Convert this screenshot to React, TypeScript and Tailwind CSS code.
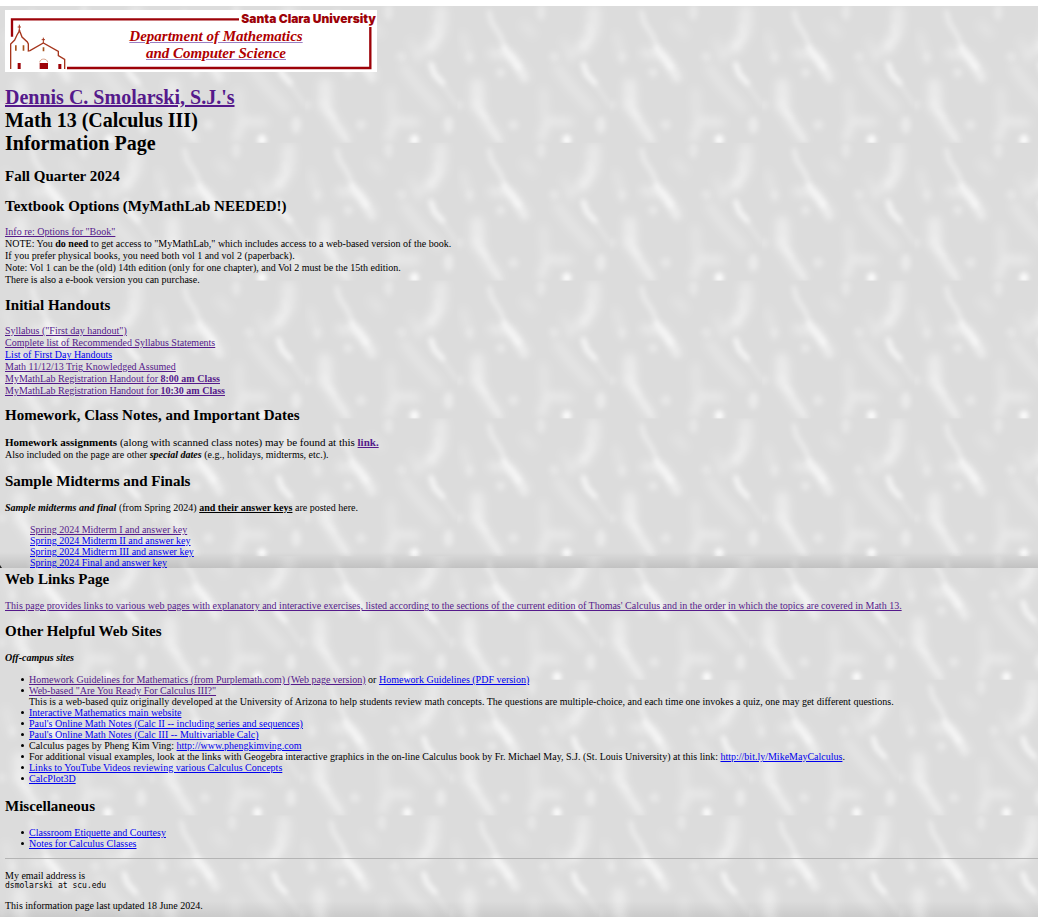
import type { ReactNode } from "react";

const visited = "text-[#551a8b] underline";
const fresh = "text-[#0000ee] underline";
const heading = "text-[15px] leading-[17px] font-bold";
const bullets =
  "pl-6 [&>li]:relative [&>li]:before:absolute [&>li]:before:top-1 [&>li]:before:-left-2 [&>li]:before:size-[3px] [&>li]:before:rounded-full [&>li]:before:bg-black";

function A({ seen = false, children }: { seen?: boolean; children: ReactNode }) {
  return (
    <a href="#" className={seen ? visited : fresh}>
      {children}
    </a>
  );
}

/* Repeating marble texture, drawn on a 456 x 414 tile. */
function Marble({ id, width, height, top }: { id: string; width: number; height: number; top: number }) {
  return (
    <svg className="absolute inset-0 -z-10 h-full w-full" aria-hidden="true">
      <defs>
        <filter id={`${id}-soft`} x="-60%" y="-60%" width="220%" height="220%">
          <feGaussianBlur stdDeviation="8" />
        </filter>
        <filter id={`${id}-haze`} x="-60%" y="-60%" width="220%" height="220%">
          <feGaussianBlur stdDeviation="13" />
        </filter>
        <pattern id={id} y={top} width={width} height={height} patternUnits="userSpaceOnUse" viewBox="0 0 456 414" preserveAspectRatio="none">
          <rect width="456" height="414" fill="#dcdcdc" />
          <g fill="none" stroke="#fff" strokeLinecap="round" strokeLinejoin="round" filter={`url(#${id}-haze)`}>
            <path d="M60 240L62 270L60 300" strokeWidth="40" opacity=".42" />
            <path d="M62 300L82 345L122 400" strokeWidth="28" opacity=".36" />
            <path d="M408 20L405 80L378 125" strokeWidth="40" opacity=".36" />
            <path d="M378 125L340 150" strokeWidth="30" opacity=".2" />
            <path d="M105 145L160 150L205 215" strokeWidth="26" opacity=".4" />
            <path d="M300 190L340 245L400 310" strokeWidth="26" opacity=".26" />
            <path d="M252 400L268 348L335 352" strokeWidth="22" opacity=".42" />
            <path d="M18 90L38 165" strokeWidth="18" opacity=".26" />
            <path d="M258 260L262 330" strokeWidth="22" opacity=".26" />
            <path d="M200 60L225 85" strokeWidth="26" opacity=".2" />
            <path d="M320 110L340 160" strokeWidth="24" opacity=".18" />
          </g>
          <g fill="none" stroke="#fff" strokeLinecap="round" strokeLinejoin="round" filter={`url(#${id}-soft)`}>
            <path d="M96 22L103 52L128 90L142 125" strokeWidth="15" opacity=".42" />
            <path d="M142 132L165 160L182 185" strokeWidth="22" opacity=".56" />
            <path d="M182 185L200 222" strokeWidth="20" opacity=".28" />
            <path d="M378 178L388 208L412 234" strokeWidth="16" opacity=".74" />
            <path d="M415 240L456 300" strokeWidth="10" opacity=".26" />
            <path d="M72 322L86 338" strokeWidth="18" opacity=".36" />
            <path d="M90 350L130 412" strokeWidth="12" opacity=".3" />
            <path d="M395 65L402 95L380 122" strokeWidth="18" opacity=".15" />
            <circle cx="130" cy="203" r="14" fill="#fff" stroke="none" opacity=".34" />
            <circle cx="290" cy="155" r="15" fill="#fff" stroke="none" opacity=".28" />
            <circle cx="168" cy="360" r="15" fill="#fff" stroke="none" opacity=".32" />
            <circle cx="6" cy="300" r="14" fill="#fff" stroke="none" opacity=".24" />
            <ellipse cx="430" cy="360" rx="15" ry="26" fill="#fff" stroke="none" opacity=".4" />
            <ellipse cx="328" cy="406" rx="13" ry="16" fill="#fff" stroke="none" opacity=".95" />
            <ellipse cx="38" cy="157" rx="9" ry="17" fill="#fff" stroke="none" opacity=".3" />
            <ellipse cx="251" cy="22" rx="13" ry="24" fill="#fff" stroke="none" opacity=".3" />
          </g>
        </pattern>
      </defs>
      <rect width="100%" height="100%" fill={`url(#${id})`} />
    </svg>
  );
}

function Banner() {
  return (
    <a href="#" className="relative flex h-[62px] w-[372px] flex-col bg-white text-[#b00000]">
      <svg className="absolute inset-0 h-full w-full" viewBox="15 15 1116 186" aria-hidden="true">
        <path d="M36 95V43H717M1111 66V189H201" fill="none" stroke="#9d0208" strokeWidth="7" />
        <g fill="none" stroke="#a5351c" strokeWidth="4">
          <path d="M32 192V117L44 105L51 90L57 80L58 74L60 80L66 96L82 111L85 117V138L90 137L130 114L175 139V152L194 163V192" />
          <path d="M58 59V76M53 66H63M130 98V114M125 104H135" strokeWidth="3" />
          <path d="M119 172C120 159 142 159 143 172" stroke="#d9a48c" strokeWidth="3" />
        </g>
        <path d="M45 121h5v16h-5zM68 121h5v16h-5zM128 127h5v12h-5z" fill="#a5541c" />
        <path d="M53 174h9v18h-9zM119 174h25v18h-25zM175 177h9v15h-9z" fill="#9d0208" />
      </svg>
      <span className="self-end pr-px font-['Inter',sans-serif] text-[12px] leading-[18px] font-black text-[#9d0208]">
        Santa Clara University
      </span>
      <span className="pl-[50px] text-center text-[15px] leading-[17px] font-bold italic underline decoration-[#9a7fc4]">
        Department of Mathematics
        <br />
        and Computer Science
      </span>
    </a>
  );
}

export default function App() {
  return (
    <main className="border-t-6 border-white bg-[#dcdcdc] font-['Liberation_Serif',serif] text-[10px] leading-[12px] text-black">
      <div className="relative isolate pt-1 pl-[5px]">
        <Marble id="marble-a" width={152.4} height={137.8} top={-1} />
        <div className="absolute inset-x-0 bottom-0 -z-10 h-4 bg-linear-to-b from-transparent to-black/12" />
        <svg className="absolute bottom-0 left-0 h-[3px] w-[2px]" viewBox="0 0 2 3" aria-hidden="true">
          <path d="M0 0L2 3H0Z" fill="#222" />
        </svg>

        <Banner />
        <h1 className="mt-[14px] text-[20px] leading-[23px] font-bold">
          <A seen>Dennis C. Smolarski, S.J.'s</A>
          <br />
          Math 13 (Calculus III)
          <br />
          Information Page
        </h1>
        <h2 className={`mt-[13px] ${heading}`}>Fall Quarter 2024</h2>

        <h2 className={`mt-[13px] ${heading}`}>Textbook Options (MyMathLab NEEDED!)</h2>
        <p className="mt-[11px]">
          <A seen>Info re: Options for "Book"</A>
          <br />
          NOTE: You <b>do need</b> to get access to "MyMathLab," which includes access to a web-based version of the book.
          <br />
          If you prefer physical books, you need both vol 1 and vol 2 (paperback).
          <br />
          Note: Vol 1 can be the (old) 14th edition (only for one chapter), and Vol 2 must be the 15th edition.
          <br />
          There is also a e-book version you can purchase.
        </p>

        <h2 className={`mt-[11px] ${heading}`}>Initial Handouts</h2>
        <p className="mt-[11px]">
          <A seen>Syllabus ("First day handout")</A>
          <br />
          <A seen>Complete list of Recommended Syllabus Statements</A>
          <br />
          <A>List of First Day Handouts</A>
          <br />
          <A seen>Math 11/12/13 Trig Knowledged Assumed</A>
          <br />
          <A seen>
            MyMathLab Registration Handout for <b>8:00 am Class</b>
          </A>
          <br />
          <A seen>
            MyMathLab Registration Handout for <b>10:30 am Class</b>
          </A>
        </p>

        <h2 className={`mt-[10px] ${heading}`}>Homework, Class Notes, and Important Dates</h2>
        <p className="mt-[12px]">
          <span className="text-[11px]">
            <b>Homework assignments</b> (along with scanned class notes) may be found at this{" "}
            <b>
              <A seen>link.</A>
            </b>
          </span>
          <br />
          Also included on the page are other <b className="italic">special dates</b> (e.g., holidays, midterms, etc.).
        </p>

        <h2 className={`mt-[12px] ${heading}`}>Sample Midterms and Finals</h2>
        <p className="mt-[12px]">
          <b className="italic">Sample midterms and final</b> (from Spring 2024) <b className="underline">and their answer keys</b> are
          posted here.
        </p>
        <ul className="mt-[10px] pl-[25px] leading-[11px]">
          <li>
            <A seen>Spring 2024 Midterm I and answer key</A>
          </li>
          <li>
            <A>Spring 2024 Midterm II and answer key</A>
          </li>
          <li>
            <A>Spring 2024 Midterm III and answer key</A>
          </li>
          <li>
            <A>Spring 2024 Final and answer key</A>
          </li>
        </ul>
      </div>

      <div className="relative isolate pt-[3px] pb-[6px] pl-[5px] leading-[11px]">
        <Marble id="marble-b" width={149.8} height={135.7} top={-24} />
        <div className="absolute inset-x-0 bottom-0 -z-10 h-4 bg-linear-to-b from-transparent to-black/8" />

        <h2 className={heading}>Web Links Page</h2>
        <p className="mt-[12px]">
          <A seen>
            This page provides links to various web pages with explanatory and interactive exercises, listed according to the sections of
            the current edition of Thomas' Calculus and in the order in which the topics are covered in Math 13.
          </A>
        </p>

        <h2 className={`mt-[12px] ${heading}`}>Other Helpful Web Sites</h2>
        <h3 className="mt-[12px] font-bold italic">Off-campus sites</h3>
        <ul className={`mt-[11px] ${bullets}`}>
          <li>
            <A seen>Homework Guidelines for Mathematics (from Purplemath.com) (Web page version)</A> or{" "}
            <A>Homework Guidelines (PDF version)</A>
          </li>
          <li>
            <A seen>Web-based "Are You Ready For Calculus III?"</A>
            <br />
            This is a web-based quiz originally developed at the University of Arizona to help students review math concepts. The
            questions are multiple-choice, and each time one invokes a quiz, one may get different questions.
          </li>
          <li>
            <A>Interactive Mathematics main website</A>
          </li>
          <li>
            <A>Paul's Online Math Notes (Calc II -- including series and sequences)</A>
          </li>
          <li>
            <A>Paul's Online Math Notes (Calc III -- Multivariable Calc)</A>
          </li>
          <li>
            Calculus pages by Pheng Kim Ving: <A>http://www.phengkimving.com</A>
          </li>
          <li>
            For additional visual examples, look at the links with Geogebra interactive graphics in the on-line Calculus book by Fr.
            Michael May, S.J. (St. Louis University) at this link: <A>http://bit.ly/MikeMayCalculus</A>.
          </li>
          <li>
            <A>Links to YouTube Videos reviewing various Calculus Concepts</A>
          </li>
          <li>
            <A>CalcPlot3D</A>
          </li>
        </ul>

        <h2 className={`mt-[14px] ${heading}`}>Miscellaneous</h2>
        <ul className={`mt-[12px] ${bullets}`}>
          <li>
            <A>Classroom Etiquette and Courtesy</A>
          </li>
          <li>
            <A>Notes for Calculus Classes</A>
          </li>
        </ul>
        <hr className="mt-[9px] border-[#b4b4b4]" />
        <p className="mt-[11px]">My email address is</p>
        <p className="font-['DejaVu_Sans_Mono',monospace] text-[8px] leading-[9px]">dsmolarski at scu.edu</p>
        <p className="mt-[10px]">This information page last updated 18 June 2024.</p>
      </div>
    </main>
  );
}
